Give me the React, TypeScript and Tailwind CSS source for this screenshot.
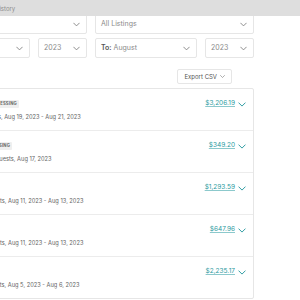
import React from "react";

const Chevron = ({ className = "" }: { className?: string }) => (
  <svg viewBox="0 0 10 6" className={className} fill="none" stroke="currentColor" strokeWidth="1.2" strokeLinecap="round" strokeLinejoin="round">
    <path d="M1 1 L5 5 L9 1" />
  </svg>
);

const Select = ({ children, w }: { children: React.ReactNode; w: string }) => (
  <div className={`${w} h-[20px] border border-[#e6e6e6] rounded-[2px] flex items-center justify-between pl-[5px] pr-[6px] bg-white`}>
    <div className="text-[7px] text-[#8a8a8a] whitespace-nowrap">{children}</div>
    <Chevron className="w-[7px] h-[5px] text-[#7a7a7a]" />
  </div>
);

type Row = { name: string; status?: string; details: string; amount: string };

const rows: Row[] = [
  { name: "Mike Brown", status: "PROCESSING", details: "Cozy Cabin · 3 guests, Aug 19, 2023 - Aug 21, 2023", amount: "$3,206.19" },
  { name: "Emma Lin", status: "PROCESSING", details: "Cozy Cottage 12 · 2 guests, Aug 17, 2023", amount: "$349.20" },
  { name: "Daniel Lee", details: "Lake Houses · 4 guests, Aug 11, 2023 - Aug 13, 2023", amount: "$1,293.59" },
  { name: "Sophia Clark", details: "Lake Houses · 4 guests, Aug 11, 2023 - Aug 13, 2023", amount: "$647.96" },
  { name: "James Miller", details: "Lake Houses · 5 guests, Aug 5, 2023 - Aug 6, 2023", amount: "$2,235.17" },
];

export default function App() {
  return (
    <div className="w-[300px] h-[300px] overflow-hidden bg-white relative" style={{ fontFamily: "Inter, 'Liberation Sans', sans-serif" }}>
      <div className="sticky top-0 z-10 h-[16px] bg-[#dedede] flex items-center">
        <div className="ml-[-40px] text-[6px] text-[#8c8c8c] whitespace-nowrap">Transaction History</div>
      </div>
      <div className="ml-[-72px] w-[326px] mt-[-2px]">
        <div className="flex gap-[8px]">
          <Select w="w-[159px]">All payout methods</Select>
          <Select w="w-[159px]">All Listings</Select>
        </div>
        <div className="flex gap-[8px] mt-[4px]">
          <Select w="w-[102px]"><span className="text-[#555] font-semibold">From:</span> June</Select>
          <Select w="w-[49px]">2023</Select>
          <Select w="w-[102px]"><span className="text-[#555] font-semibold">To:</span> August</Select>
          <Select w="w-[49px]">2023</Select>
        </div>
        <div className="h-[15px] flex items-center justify-between mt-[11px] pr-[22px]">
          <div className="pl-[48px] text-[6px] leading-[8px]">
            <a className="text-[#3d8fd6] whitespace-nowrap">Paid out</a>
          </div>
          <div className="h-[15px] border border-[#e6e6e6] rounded-[2px] flex items-center gap-[3px] px-[6px]">
            <span className="text-[6px] text-[#555]">Export CSV</span>
            <Chevron className="w-[5px] h-[3px] text-[#777]" />
          </div>
        </div>
        <div className="mt-[4px] border border-[#e6e6e6] rounded-[2px]">
          {rows.map((r, i) => (
            <div key={i} className={`${i > 0 ? "border-t border-[#ececec]" : ""} pl-[13px] pr-[7px] pt-[10px] pb-[8px] flex justify-between`}>
              <div className="flex flex-col gap-[3px]">
                <div className="h-[10px] flex items-center gap-[4px]">
                  <span className="text-[7px] font-semibold text-[#484848] whitespace-nowrap">{r.name}</span>
                  {r.status && (
                    <span className="bg-[#efefef] rounded-[1px] px-[2px] h-[8px] flex items-center text-[4.2px] font-bold tracking-[0.2px] text-[#666]">{r.status}</span>
                  )}
                </div>
                <div className="h-[10px] flex items-center text-[5.7px] text-[#636363] whitespace-nowrap">{r.details}</div>
              </div>
              <div className="h-[10px] flex items-center gap-[3px]">
                <span className="text-[6.5px] text-[#2a9aa0] underline decoration-[#8cc9cc]">{r.amount}</span>
                <Chevron className="w-[8px] h-[5px] text-[#2a9aa0]" />
              </div>
            </div>
          ))}
        </div>
      </div>
    </div>
  );
}
